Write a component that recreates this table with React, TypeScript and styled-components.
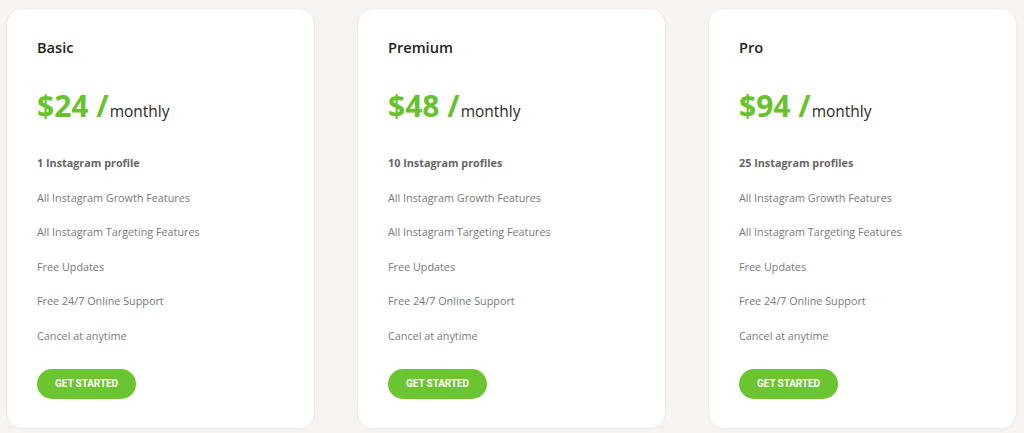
import React from "react";
import styled, { createGlobalStyle } from "styled-components";

const Global = createGlobalStyle`
  html, body { margin: 0; padding: 0; }
  body {
    background: #f7f3f0;
    font-family: "Open Sans", "Noto Sans", sans-serif;
    width: 1024px;
    height: 433px;
    overflow: hidden;
  }
`;

const Row = styled.div`
  display: flex;
  gap: 42px;
  padding: 8px 0 0 6px;
`;

const Card = styled.div`
  box-sizing: border-box;
  width: 309px;
  height: 421px;
  background: #ffffff;
  border: 1px solid #efeae6;
  border-radius: 16px;
  padding: 27px 30px 0 30px;
  display: flex;
  flex-direction: column;
  align-items: flex-start;
`;

const Title = styled.h3`
  margin: 0;
  font-size: 14.6px;
  line-height: 22px;
  font-weight: 600;
  color: #222222;
`;

const Price = styled.div`
  margin-top: 28px;
  height: 40px;
  display: flex;
  align-items: baseline;
  color: #66c32c;
  font-size: 30px;
  line-height: 40px;
  font-weight: 700;
`;

const Period = styled.span`
  margin-left: 1px;
  font-size: 15.5px;
  font-weight: 400;
  color: #2a2a2a;
`;

const List = styled.ul`
  list-style: none;
  margin: 20px 0 0 0;
  padding: 0;
`;

const Item = styled.li<{ $bold?: boolean }>`
  font-size: 10.8px;
  line-height: 34.6px;
  color: ${(p) => (p.$bold ? "#666666" : "#7a7a7a")};
  font-weight: ${(p) => (p.$bold ? 700 : 400)};
`;

const Button = styled.button`
  margin-top: 15px;
  width: 99px;
  height: 30px;
  border: none;
  border-radius: 15px;
  background: #6bc530;
  color: #ffffff;
  font-family: "Roboto", "Liberation Sans", sans-serif;
  font-size: 10px;
  font-weight: 700;
  letter-spacing: -0.1px;
  padding: 0;
  cursor: pointer;
`;

const plans = [
  { name: "Basic", price: "$24", profiles: "1 Instagram profile" },
  { name: "Premium", price: "$48", profiles: "10 Instagram profiles" },
  { name: "Pro", price: "$94", profiles: "25 Instagram profiles" },
];

const features = [
  "All Instagram Growth Features",
  "All Instagram Targeting Features",
  "Free Updates",
  "Free 24/7 Online Support",
  "Cancel at anytime",
];

export default function App() {
  return (
    <>
      <Global />
      <Row>
        {plans.map((p) => (
          <Card key={p.name}>
            <Title>{p.name}</Title>
            <Price>
              {p.price} /<Period>monthly</Period>
            </Price>
            <List>
              <Item $bold>{p.profiles}</Item>
              {features.map((f) => (
                <Item key={f}>{f}</Item>
              ))}
            </List>
            <Button>GET STARTED</Button>
          </Card>
        ))}
      </Row>
    </>
  );
}
